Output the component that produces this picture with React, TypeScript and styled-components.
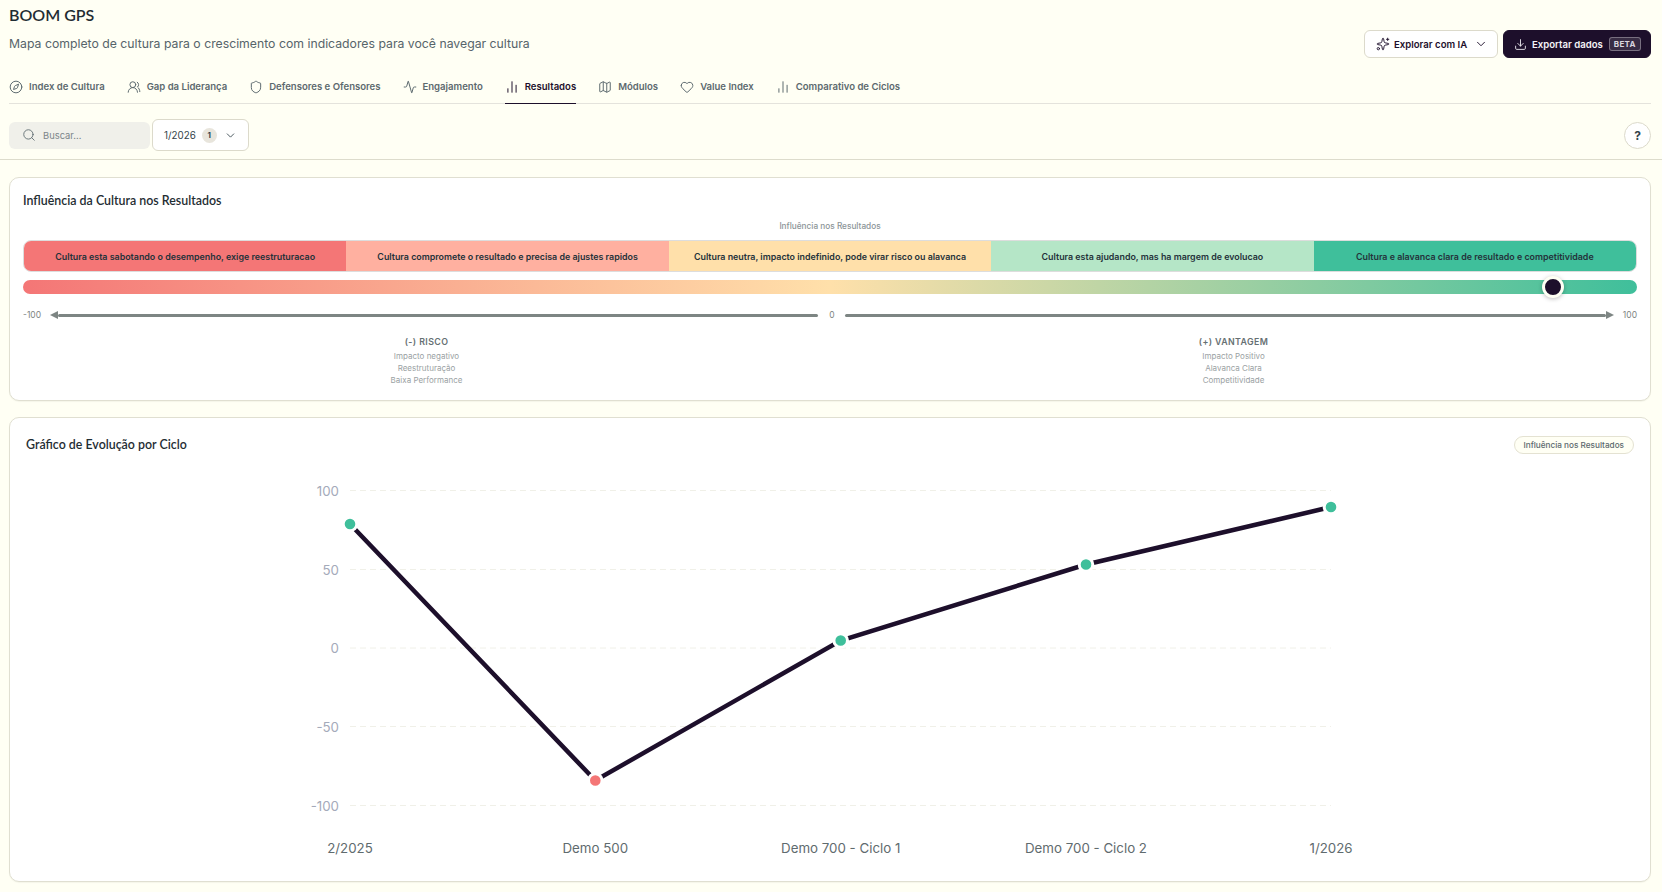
import React from "react";
import styled, { createGlobalStyle } from "styled-components";
import {
  Activity,
  ChartNoAxesColumn,
  ChevronDown,
  Compass,
  Download,
  Heart,
  Map as MapIcon,
  Search,
  Shield,
  Sparkles,
  UsersRound,
} from "lucide-react";

const ink = "#1d0f2b";
const green = "#3fbf9b";
const red = "#f47676";

const GlobalStyle = createGlobalStyle`
  html, body {
    margin: 0;
    padding: 0;
    background: #fffff4;
    font-family: "Inter", "Liberation Sans", sans-serif;
    color: #1f2d33;
  }
  * { box-sizing: border-box; }
`;

const Page = styled.div`
  width: 1662px;
  height: 892px;
  overflow: hidden;
`;

const Top = styled.header`
  padding: 0 11px 0 9px;
  height: 160px;
  border-bottom: 1px solid #dddccc;
  display: flex;
  flex-direction: column;
  width: 1662px;
`;

const TitleRow = styled.div`
  height: 58px;
  flex: none;
  display: flex;
  justify-content: space-between;
`;

const TitleCol = styled.div`
  padding-top: 6px;
`;

const Title = styled.h1`
  margin: 0;
  font: 600 16px/18px "Lato", sans-serif;
  color: #1f2d33;
`;

const Subtitle = styled.p`
  margin: 12px 0 0;
  font: 400 12.25px/16px "Inter", sans-serif;
  color: #56646a;
`;

const Actions = styled.div`
  display: flex;
  gap: 5px;
  padding: 30px 0 0;
  height: 58px;
`;

const AiButton = styled.button`
  width: 134px;
  height: 28px;
  display: flex;
  align-items: center;
  gap: 4px;
  background: #fff;
  border: 1px solid #dcdacb;
  border-radius: 6px;
  color: ${ink};
  font: 600 9.6px "Inter", sans-serif;
  padding: 0 0 0 11px;
`;

const ExportButton = styled(AiButton)`
  width: 148px;
  gap: 5px;
  padding-left: 10px;
  background: ${ink};
  border-color: ${ink};
  color: #f6f4f8;
`;

const BetaTag = styled.span`
  font-size: 8px;
  font-weight: 700;
  letter-spacing: 0.3px;
  color: #d9d5de;
  background: rgba(255, 255, 255, 0.12);
  border: 1px solid rgba(255, 255, 255, 0.32);
  border-radius: 3px;
  padding: 1px 4px;
  margin-left: 1px;
`;

const Tabs = styled.nav`
  height: 46px;
  flex: none;
  display: flex;
  gap: 22px;
  border-bottom: 1px solid #e4e3dc;
`;

const Tab = styled.a<{ $active?: boolean }>`
  display: flex;
  align-items: center;
  gap: 6px;
  height: 46px;
  margin-bottom: -1px;
  padding: 12px 0 0;
  font-size: 9.55px;
  font-weight: 600;
  color: ${(p) => (p.$active ? ink : "#5c696e")};
  border-bottom: 1px solid ${(p) => (p.$active ? ink : "transparent")};
  svg {
    flex: none;
  }
`;

const FilterRow = styled.div`
  display: flex;
  align-items: center;
  height: 55px;
  padding-top: 7px;
`;

const SearchBox = styled.div`
  width: 141px;
  height: 27px;
  background: #f0f0ea;
  border-radius: 6px;
  display: flex;
  align-items: center;
  gap: 7px;
  padding-left: 13px;
  color: #7b8589;
  font-size: 9.4px;
  svg {
    color: #5c696e;
  }
`;

const CycleSelect = styled.div`
  margin-left: 2px;
  width: 97px;
  height: 32px;
  background: #fff;
  border: 1px solid #dcdacb;
  border-radius: 6px;
  display: flex;
  align-items: center;
  padding-left: 11px;
  font-size: 9.8px;
  color: #33434a;
`;

const CountBadge = styled.span`
  width: 15px;
  height: 15px;
  margin: 0 7px 0 6px;
  border-radius: 50%;
  background: #e8e5dc;
  display: flex;
  align-items: center;
  justify-content: center;
  font-size: 8px;
  font-weight: 700;
`;

const HelpButton = styled.button`
  margin-left: auto;
  width: 27px;
  height: 27px;
  padding: 0;
  border-radius: 50%;
  background: #fff;
  border: 1px solid #dcdacb;
  color: #33434a;
  font: 700 12px "Inter", sans-serif;
`;

const Content = styled.main`
  padding: 17px 11px 0 9px;
  display: flex;
  flex-direction: column;
  gap: 16px;
`;

const Card = styled.section<{ $height: number }>`
  height: ${(p) => p.$height}px;
  background: #fff;
  border: 1px solid #e0dfd1;
  border-radius: 10px;
  box-shadow: 0 1px 1px rgba(60, 60, 40, 0.05);
`;

const InfluenceBody = styled.div`
  padding: 15px 13px 0 13px;
`;

const CardTitle = styled.h2`
  margin: 0;
  font: 600 12.4px/16px "Lato", sans-serif;
  color: #1f2d33;
`;

const Caption = styled.div`
  margin-top: 12px;
  text-align: center;
  font-size: 8.25px;
  line-height: 10px;
  font-weight: 500;
  color: #8b9497;
`;

const Segments = styled.div`
  margin-top: 9px;
  height: 32px;
  display: grid;
  grid-template-columns: repeat(5, 1fr);
  border: 1px solid #ddd;
  border-radius: 8px;
  overflow: hidden;
`;

const Segment = styled.div<{ $bg: string }>`
  background: ${(p) => p.$bg};
  display: flex;
  align-items: center;
  justify-content: center;
  font-size: 8.9px;
  font-weight: 600;
  color: #24323a;
`;

const GradientBar = styled.div`
  position: relative;
  margin-top: 8px;
  height: 14px;
  border-radius: 7px;
  background: linear-gradient(90deg, ${red} 0%, #ffe0aa 50%, ${green} 100%);
`;

const Marker = styled.span`
  position: absolute;
  top: -4px;
  width: 22px;
  height: 22px;
  margin-left: -11px;
  background: ${ink};
  border: 3px solid #fffff4;
  border-radius: 50%;
  box-shadow: 0 1px 4px rgba(0, 0, 0, 0.25);
`;

const AxisRow = styled.div`
  margin-top: 15px;
  height: 12px;
  display: flex;
  align-items: center;
  font-size: 8.5px;
  color: #7d8583;
`;

const AxisEnd = styled.span`
  flex: none;
`;

const ArrowLeft = styled.i`
  flex: none;
  margin-left: 9px;
  width: 0;
  height: 0;
  border-style: solid;
  border-width: 4.5px 8px 4.5px 0;
  border-color: transparent #7d8583 transparent transparent;
`;

const ArrowRight = styled.i`
  flex: none;
  margin-right: 9px;
  width: 0;
  height: 0;
  border-style: solid;
  border-width: 4.5px 0 4.5px 8px;
  border-color: transparent transparent transparent #7d8583;
`;

const AxisLine = styled.div`
  flex: 1;
  height: 3px;
  background: #7d8583;
  border-radius: 2px;
`;

const AxisZero = styled.span`
  flex: none;
  width: 27px;
  text-align: center;
`;

const Legend = styled.div`
  margin-top: 15px;
  display: grid;
  grid-template-columns: 1fr 1fr;
`;

const LegendCol = styled.div`
  text-align: center;
  font-size: 8px;
  line-height: 12px;
  color: #9aa1a3;
`;

const LegendHead = styled.div`
  font-size: 8.8px;
  font-weight: 600;
  letter-spacing: 0.4px;
  color: #667073;
  margin-bottom: 2px;
`;

const ChartHead = styled.div`
  display: flex;
  justify-content: space-between;
  align-items: center;
  padding: 18px 16px 0 16px;
`;

const Pill = styled.span`
  height: 18px;
  padding: 0 9px;
  display: flex;
  align-items: center;
  background: #fffff4;
  border: 1px solid #e4e2d2;
  border-radius: 9px;
  font-size: 8.2px;
  font-weight: 500;
  color: #5c696e;
`;

const ChartSvg = styled.svg`
  display: block;
  margin-top: 1px;
`;

const tabs = [
  { label: "Index de Cultura", icon: Compass },
  { label: "Gap da Liderança", icon: UsersRound },
  { label: "Defensores e Ofensores", icon: Shield },
  { label: "Engajamento", icon: Activity },
  { label: "Resultados", icon: ChartNoAxesColumn, active: true },
  { label: "Módulos", icon: MapIcon },
  { label: "Value Index", icon: Heart },
  { label: "Comparativo de Ciclos", icon: ChartNoAxesColumn },
];

const segments = [
  { bg: red, text: "Cultura esta sabotando o desempenho, exige reestruturacao" },
  { bg: "#ffb0a0", text: "Cultura compromete o resultado e precisa de ajustes rapidos" },
  { bg: "#ffe0aa", text: "Cultura neutra, impacto indefinido, pode virar risco ou alavanca" },
  { bg: "#b5e6c7", text: "Cultura esta ajudando, mas ha margem de evolucao" },
  { bg: green, text: "Cultura e alavanca clara de resultado e competitividade" },
];

// svg origin sits at the card's inner left edge, right under the header
const originX = 10;
const originY = 455;
const points = [
  { x: 350, y: 524, label: "2/2025", color: green },
  { x: 595.3, y: 780.5, label: "Demo 500", color: red },
  { x: 840.7, y: 640.5, label: "Demo 700 - Ciclo 1", color: green },
  { x: 1086, y: 564.5, label: "Demo 700 - Ciclo 2", color: green },
  { x: 1331, y: 507, label: "1/2026", color: green },
];
const ticks = [
  { y: 490.5, label: "100" },
  { y: 569.5, label: "50" },
  { y: 648, label: "0" },
  { y: 726.5, label: "-50" },
  { y: 805.5, label: "-100" },
];

function EvolutionChart() {
  const line = points.map((p) => `${p.x - originX},${p.y - originY}`).join(" ");
  return (
    <ChartSvg width={1638} height={420}>
      {ticks.map((t) => (
        <g key={t.label}>
          <line
            x1={350 - originX}
            x2={1331 - originX}
            y1={t.y - originY}
            y2={t.y - originY}
            stroke="#f0f0e8"
            strokeWidth={1}
            strokeDasharray="6 4"
          />
          <text
            x={339 - originX}
            y={t.y - originY + 5}
            textAnchor="end"
            fontSize={13.3}
            fontFamily="Inter, sans-serif"
            fill="#a4aaba"
          >
            {t.label}
          </text>
        </g>
      ))}
      <polyline points={line} fill="none" stroke={ink} strokeWidth={4.5} />
      {points.map((p) => (
        <g key={p.label}>
          <circle
            cx={p.x - originX}
            cy={p.y - originY}
            r={6.8}
            fill={p.color}
            stroke="#fff"
            strokeWidth={3}
          />
          <text
            x={p.x - originX}
            y={848 - originY + 5}
            textAnchor="middle"
            fontSize={13.3}
            fontFamily="Inter, sans-serif"
            fill="#5f6b6e"
          >
            {p.label}
          </text>
        </g>
      ))}
    </ChartSvg>
  );
}

export default function App() {
  return (
    <Page>
      <GlobalStyle />
      <Top>
        <TitleRow>
          <TitleCol>
            <Title>BOOM GPS</Title>
            <Subtitle>
              Mapa completo de cultura para o crescimento com indicadores para você navegar cultura
            </Subtitle>
          </TitleCol>
          <Actions>
            <AiButton>
              <Sparkles size={14} strokeWidth={1.6} />
              Explorar com IA
              <ChevronDown size={14} strokeWidth={1.6} style={{ marginLeft: 3 }} />
            </AiButton>
            <ExportButton>
              <Download size={13} strokeWidth={1.6} />
              Exportar dados
              <BetaTag>BETA</BetaTag>
            </ExportButton>
          </Actions>
        </TitleRow>
        <Tabs>
          {tabs.map((t) => (
            <Tab key={t.label} $active={t.active}>
              <t.icon size={14} strokeWidth={1.7} />
              {t.label}
            </Tab>
          ))}
        </Tabs>
        <FilterRow>
          <SearchBox>
            <Search size={14} strokeWidth={1.5} />
            Buscar...
          </SearchBox>
          <CycleSelect>
            1/2026
            <CountBadge>1</CountBadge>
            <ChevronDown size={13} strokeWidth={1.6} />
          </CycleSelect>
          <HelpButton>?</HelpButton>
        </FilterRow>
      </Top>
      <Content>
        <Card $height={224}>
          <InfluenceBody>
            <CardTitle>Influência da Cultura nos Resultados</CardTitle>
            <Caption>Influência nos Resultados</Caption>
            <Segments>
              {segments.map((s) => (
                <Segment key={s.text} $bg={s.bg}>
                  {s.text}
                </Segment>
              ))}
            </Segments>
            <GradientBar>
              <Marker style={{ left: `${(94.8).toFixed(1)}%` }} />
            </GradientBar>
            <AxisRow>
              <AxisEnd>-100</AxisEnd>
              <ArrowLeft />
              <AxisLine />
              <AxisZero>0</AxisZero>
              <AxisLine />
              <ArrowRight />
              <AxisEnd>100</AxisEnd>
            </AxisRow>
            <Legend>
              <LegendCol>
                <LegendHead>(-) RISCO</LegendHead>
                <div>Impacto negativo</div>
                <div>Reestruturação</div>
                <div>Baixa Performance</div>
              </LegendCol>
              <LegendCol>
                <LegendHead>(+) VANTAGEM</LegendHead>
                <div>Impacto Positivo</div>
                <div>Alavanca Clara</div>
                <div>Competitividade</div>
              </LegendCol>
            </Legend>
          </InfluenceBody>
        </Card>
        <Card $height={465}>
          <ChartHead>
            <CardTitle>Gráfico de Evolução por Ciclo</CardTitle>
            <Pill>Influência nos Resultados</Pill>
          </ChartHead>
          <EvolutionChart />
        </Card>
      </Content>
    </Page>
  );
}
